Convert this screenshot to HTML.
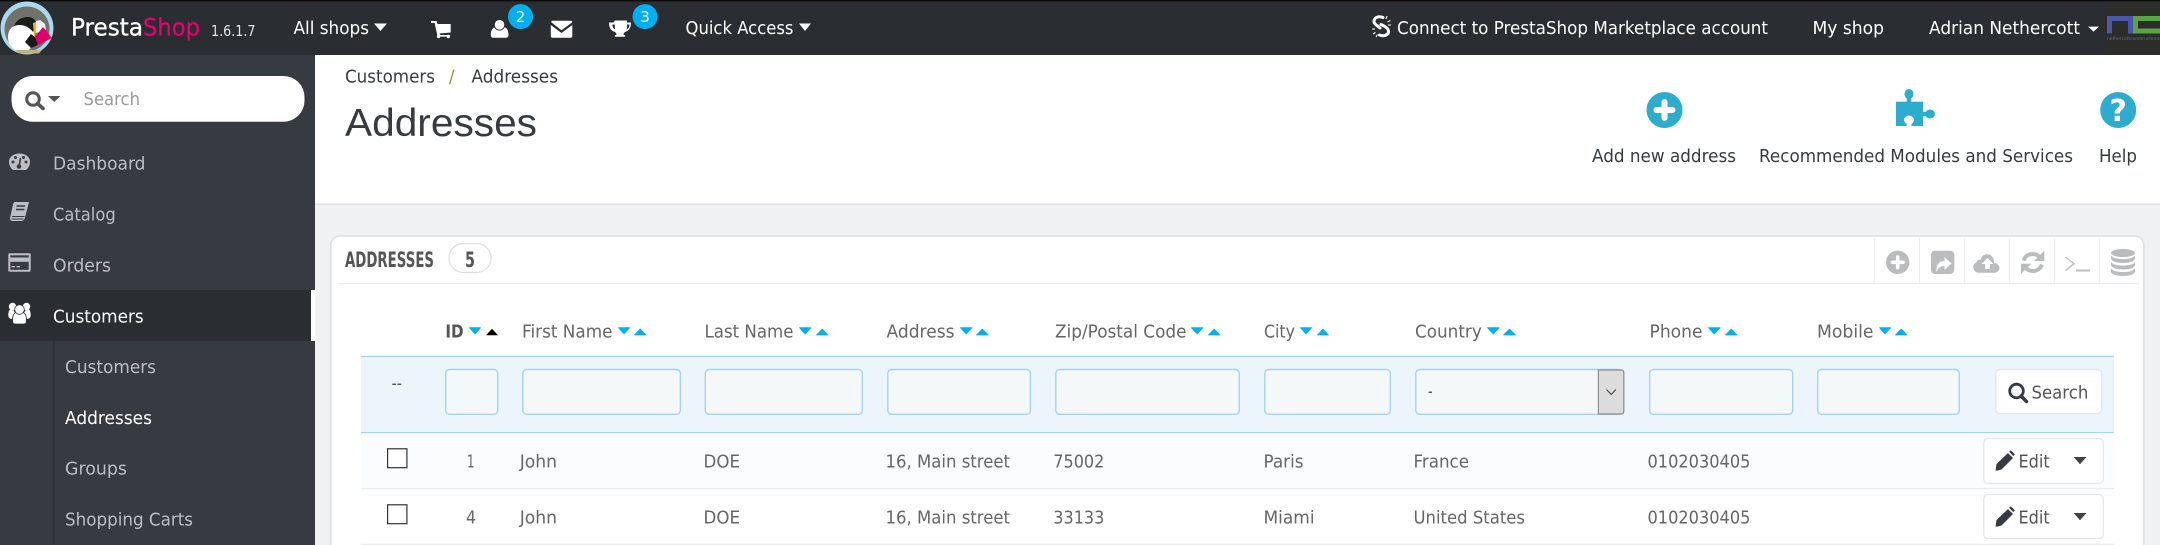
<!DOCTYPE html>
<html><head><meta charset="utf-8"><title>Addresses</title>
<style>
html,body{margin:0;padding:0;background:#eff1f2;width:2160px;height:545px;overflow:hidden}
svg{display:block}
text{font-family:"DejaVu Sans","Liberation Sans",sans-serif;font-size:18px}
.nav{fill:#fff}
.side{fill:#bcbec2}
.head{fill:#666}
.cell{fill:#666}
.dark{fill:#363a41}
.arr{fill:#00aff0;stroke:#00aff0;stroke-width:.8;stroke-linejoin:round}
.inp{fill:#f5f8f9;stroke:#a6d3ec;stroke-width:1.4}
.tool{fill:#bbbcbd}
</style></head><body>
<svg xmlns="http://www.w3.org/2000/svg" width="2160" height="545" viewBox="0 0 2160 545">
<!-- backgrounds -->
<rect width="2160" height="545" fill="#eff1f2"/>
<rect x="315" y="55" width="1845" height="149" fill="#fff"/>
<rect x="315" y="203.5" width="1845" height="1.5" fill="#dfe1e3"/>
<rect y="55" width="315" height="490" fill="#363a41"/>
<rect width="2160" height="55" fill="#2a2d32"/>
<rect width="2160" height="1.4" fill="#0c0c0c"/>

<!-- logo -->
<circle cx="27" cy="28" r="26.5" fill="#a8d9ec"/>
<circle cx="27" cy="29" r="22.500" fill="#72726d"/>
<path d="M8 37C8 30 12 25 20 25c7 0 13 3 15 9v9l-6 7H15C10 47 8 42 8 37Z" fill="#fff"/>
<path d="M14 26c2-6 8-9 14-9 4 0 7 2 8 6l-3 9c-3-4-8-7-13-7-2 0-4 0-6 1Z" fill="#1c1c1c"/>
<path d="M36 21l4-1 5 4 1 6-10 3Z" fill="#f4f4f4"/>
<path d="M33 23l3-1 0 11-2 4Z" fill="#f2b01e"/>
<path d="M43 27l9 11-14 7-3-8Z" fill="#df0067"/>
<path d="M25 42l6-8 4 3 3 8-7 3Z" fill="#1a1a1a"/>
<path d="M16 50h26l-3 3.500H19Z" fill="#c2b085"/>
<text x="71" y="35.5" style="font-size:24px;stroke:#fff;stroke-width:.3" fill="#fff" textLength="72" lengthAdjust="spacingAndGlyphs">Presta</text>
<text x="143" y="35.5" style="font-size:24px;stroke:#e6006b;stroke-width:.3" fill="#e6006b" textLength="57" lengthAdjust="spacingAndGlyphs">Shop</text>
<text x="211" y="36" style="font-size:15px" fill="#e4e4e4" textLength="44.500" lengthAdjust="spacingAndGlyphs">1.6.1.7</text>

<!-- top nav -->
<text class="nav" x="293.500" y="34" textLength="75.500" lengthAdjust="spacingAndGlyphs">All shops</text>
<polygon class="nav" points="374,23.5 387,23.5 380.5,31"/>
<!-- cart -->
<path class="nav" d="M431 21h5.5l1 3h13.2v8.500l-11 1 .4 1.500h10v1.600h-12.500L434.600 23H431Z"/>
<circle class="nav" cx="438.5" cy="36.5" r="1.7"/><circle class="nav" cx="448.3" cy="36.5" r="1.7"/>
<!-- user -->
<path class="nav" d="M490.800 35c0-5 2-7.500 5-8 2.500 1.800 5.500 1.800 8 0 3 .5 4.700 3 4.700 8 0 2-1.200 2.800-3 2.800h-11.700C492 37.800 490.800 37 490.800 35Z"/>
<circle class="nav" cx="499.500" cy="24.800" r="5.300" stroke="#2a2d32" stroke-width="1"/>
<!-- envelope -->
<path class="nav" d="M552.5 20.800h18.500c1 0 1.300.5 1.300 1.500l-10.800 8-10.200-8c0-1 .2-1.500 1.200-1.500Z"/>
<path class="nav" d="M550.800 25l10.700 8 10.800-8v11c0 1-.6 1.700-1.600 1.700h-18.300c-1 0-1.600-.7-1.600-1.700Z"/>
<!-- trophy -->
<path class="nav" d="M615 20.500h12v2h4c0 5-1.500 8-6 9.500-.7.700-1.300 1.300-1.600 2.400 0 .6 1.600.8 1.800 1.400v1h-10.400v-1c.2-.6 1.800-.8 1.800-1.400-.3-1.100-.9-1.700-1.600-2.400-4.500-1.500-6-4.500-6-9.500h4.500Zm-2.700 4c.2 2.500 1 4 2.900 5-.3-1.500-.4-3.200-.5-5Zm14.800 0c0 1.800-.2 3.500-.5 5 1.900-1 2.700-2.500 2.900-5Z"/>
<circle cx="520.5" cy="16.6" r="12.5" fill="#00aff0"/>
<text x="520.5" y="22" text-anchor="middle" fill="#fff" style="font-size:15px">2</text>
<circle cx="645" cy="16.6" r="12.5" fill="#00aff0"/>
<text x="645" y="22" text-anchor="middle" fill="#fff" style="font-size:15px">3</text>
<text class="nav" x="685.500" y="34" textLength="108" lengthAdjust="spacingAndGlyphs">Quick Access</text>
<polygon class="nav" points="799,23.5 811,23.5 805,31"/>
<!-- broken link -->
<g fill="none" stroke="#fff" stroke-width="3" stroke-linecap="round">
<path d="M1383 17.500C1378 15.500 1373.500 18 1374 22 1374.500 24.500 1378 26 1380 28"/>
<path d="M1381 24.500C1384.500 26 1389 28.500 1388.500 32 1388 35.500 1383 36.500 1379.500 35"/>
</g>
<g stroke="#fff" stroke-width="1.100"><path d="M1386 19l1-3M1387.500 22l2.800-1.500M1388 25h3M1372 29h3M1373 34l2.500-1.500M1376 37l1.500-2.500"/></g>
<text class="nav" x="1397" y="34" textLength="371" lengthAdjust="spacingAndGlyphs">Connect to PrestaShop Marketplace account</text>
<text class="nav" x="1812.500" y="34" textLength="71.500" lengthAdjust="spacingAndGlyphs">My shop</text>
<text class="nav" x="1929" y="34" textLength="151" lengthAdjust="spacingAndGlyphs">Adrian Nethercott</text>
<polygon class="nav" points="2088,26.6 2099,26.6 2093.5,31.6"/>
<!-- nc logo -->
<rect x="2105" y="1.4" width="55" height="53.6" fill="#2c2c29"/>
<path d="M2107 33.500V16h26v17.500h-5V21h-16v12.500Z" fill="#4a58ab"/>
<path d="M2160 16h-27v17.500h27v-5h-22V21h22Z" fill="#5da248"/>
<text x="2107" y="40" style="font-size:4.3px" fill="#5e6a8f" textLength="53" lengthAdjust="spacingAndGlyphs">nethercottconstructions</text>

<!-- sidebar search -->
<rect x="11.5" y="76" width="293" height="45.7" rx="21" fill="#fff"/>
<circle cx="33" cy="99" r="6.300" fill="none" stroke="#555" stroke-width="3"/>
<path d="M37.500 103.500l5.500 5" stroke="#555" stroke-width="3.600" stroke-linecap="round"/>
<polygon points="48,96 60.500,96 54.200,102" fill="#555"/>
<text x="83.500" y="105" fill="#999" textLength="56.500" lengthAdjust="spacingAndGlyphs">Search</text>

<!-- sidebar menu -->
<rect y="290" width="311" height="51" fill="#2a2d32"/>
<rect x="311" y="290" width="4" height="51" fill="#fff"/>
<rect x="53" y="341" width="1.4" height="204" fill="#2a2d32"/>
<!-- dashboard -->
<path class="side" d="M13 170c-2.500-2-4-5-4-8.500C9 157 13.500 153.500 19.500 153.500S30 157 30 161.500c0 3.500-1.500 6.500-4 8.500Z"/>
<g fill="#363a41"><circle cx="13" cy="162" r="1.500"/><circle cx="15.500" cy="157.500" r="1.500"/><circle cx="26" cy="162" r="1.500"/><circle cx="23.500" cy="157.500" r="1.500"/></g>
<path d="M19 167l1.500-9" stroke="#363a41" stroke-width="1.600"/><circle cx="19" cy="166.500" r="2.300" fill="#363a41"/>
<text class="side" x="53" y="169.500" textLength="92.500" lengthAdjust="spacingAndGlyphs">Dashboard</text>
<!-- catalog -->
<path class="side" d="M15 202h14l-4 15.500c-.5 2-1.500 3.500-4 3.500H12.500c-2 0-2.800-1.500-2.300-3.500L13 204.500C13.300 203 14 202 15 202Z"/>
<path d="M12 216.500h12.500M11.500 219h12" stroke="#363a41" stroke-width="1"/>
<path d="M16.500 206h8.500M16 209.500h8.500" stroke="#363a41" stroke-width="1.500"/>
<text class="side" x="53" y="220.300" textLength="62.700" lengthAdjust="spacingAndGlyphs">Catalog</text>
<!-- orders -->
<rect class="side" x="8.3" y="253.3" width="22.4" height="18.4" rx="1.5"/>
<rect x="10.3" y="255.3" width="18.4" height="2.2" fill="#363a41"/>
<rect x="10.3" y="261.800" width="18.4" height="8" fill="#363a41"/>
<path d="M11.500 266.700h3.500M16.500 266.700h3.500" stroke="#bcbec2" stroke-width="1.300"/>
<text class="side" x="53" y="271.300" textLength="58" lengthAdjust="spacingAndGlyphs">Orders</text>
<!-- customers -->
<g fill="#fff"><circle cx="12.500" cy="306.500" r="3.700"/><circle cx="26.500" cy="306.500" r="3.700"/>
<path d="M8.300 315c0-3 .7-5 2-5.500 1.500 1 2.500 1 3.500.7.300 1.200.800 2 1.600 2.800-2 1-3 3-3.200 6-2.600 0-3.900-1.500-3.900-4Z"/>
<path d="M30.700 315c0-3-.7-5-2-5.500-1.500 1-2.500 1-3.500.7-.3 1.200-.8 2-1.600 2.800 2 1 3 3 3.200 6 2.600 0 3.900-1.500 3.900-4Z"/>
<path d="M12.500 321c0-5 1.500-8 3.500-8.500 2 1.500 5 1.500 7 0 2 .5 3.500 3.500 3.500 8.500 0 2-1 3-2.500 3h-9c-1.500 0-2.500-1-2.500-3Z" stroke="#2a2d32" stroke-width=".8"/>
<circle cx="19.500" cy="309.500" r="4.800" stroke="#2a2d32" stroke-width=".8"/></g>
<text x="53" y="322.300" fill="#fff" textLength="90.700" lengthAdjust="spacingAndGlyphs">Customers</text>
<text class="side" x="65" y="372.800" textLength="91" lengthAdjust="spacingAndGlyphs">Customers</text>
<text x="65" y="423.800" fill="#fff" textLength="87" lengthAdjust="spacingAndGlyphs">Addresses</text>
<text class="side" x="65" y="474.600" textLength="62" lengthAdjust="spacingAndGlyphs">Groups</text>
<text class="side" x="65" y="525.600" textLength="128" lengthAdjust="spacingAndGlyphs">Shopping Carts</text>

<!-- page head -->
<text class="dark" x="345" y="82.5" textLength="90" lengthAdjust="spacingAndGlyphs">Customers</text>
<text x="449" y="82.5" fill="#6aa62f" textLength="5.5" lengthAdjust="spacingAndGlyphs">/</text>
<text class="dark" x="471.5" y="82.5" textLength="86.5" lengthAdjust="spacingAndGlyphs">Addresses</text>
<text x="345" y="136" fill="#363a41" style="font-size:39px;font-family:'Liberation Sans',sans-serif" textLength="192" lengthAdjust="spacingAndGlyphs">Addresses</text>
<!-- page toolbar -->
<circle cx="1664.5" cy="110" r="18" fill="#2eacce"/>
<path d="M1664.500 102v16M1656.500 110h16" stroke="#fff" stroke-width="6" stroke-linecap="round"/>
<g fill="#2eacce">
<rect x="1896" y="101.7" width="27" height="24.3"/>
<ellipse cx="1909" cy="94" rx="4.5" ry="5"/><rect x="1906.8" y="96" width="4.4" height="7"/>
<ellipse cx="1930" cy="114" rx="5" ry="4.5"/><rect x="1922" y="111.8" width="6" height="4.4"/>
</g>
<ellipse cx="1909" cy="120" rx="5" ry="4.5" fill="#fff"/><rect x="1906.6" y="121" width="4.8" height="5" fill="#fff"/>
<circle cx="2118.2" cy="110" r="18" fill="#2eacce"/>
<text x="2118.2" y="121" text-anchor="middle" fill="#fff" style="font-size:30px;font-weight:bold">?</text>
<text class="dark" x="1592" y="162" textLength="144" lengthAdjust="spacingAndGlyphs">Add new address</text>
<text class="dark" x="1759" y="162" textLength="314" lengthAdjust="spacingAndGlyphs">Recommended Modules and Services</text>
<text class="dark" x="2099" y="162" textLength="38" lengthAdjust="spacingAndGlyphs">Help</text>

<!-- panel -->
<rect x="330.8" y="236" width="1813" height="330" rx="9" fill="#fff" stroke="#dcdee0" stroke-width="1.5"/>
<rect x="337.5" y="283" width="1800.5" height="1.2" fill="#eeeeee"/>
<text x="345" y="267" fill="#555" style="font-size:21.500px;font-weight:bold" textLength="89" lengthAdjust="spacingAndGlyphs">ADDRESSES</text>
<rect x="449" y="243.5" width="42" height="29" rx="14.5" fill="#fff" stroke="#dcdee0" stroke-width="1.2"/>
<text x="470" y="267" text-anchor="middle" fill="#555" style="font-size:21.500px;font-weight:bold" textLength="10" lengthAdjust="spacingAndGlyphs">5</text>
<!-- panel tools -->
<g fill="#eeeeee"><rect x="1874" y="238" width="1" height="45"/><rect x="1919" y="238" width="1" height="45"/><rect x="1964" y="238" width="1" height="45"/><rect x="2009" y="238" width="1" height="45"/><rect x="2054" y="238" width="1" height="45"/><rect x="2099" y="238" width="1" height="45"/></g>
<circle class="tool" cx="1897.7" cy="262.3" r="11.7"/>
<path d="M1897.700 257v10.600M1892.400 262.300h10.600" stroke="#fff" stroke-width="3.600" stroke-linecap="round"/>
<rect class="tool" x="1931" y="250.7" width="23.3" height="23.3" rx="4"/>
<path d="M1936.500 272c-.5-6 1-10.500 8-11v-4l7 6.500-7 6.500v-4c-4 0-6 1.500-8 6Z" fill="#fff"/>
<path class="tool" d="M1979 272.700c-3.500 0-5.700-2.500-5.700-5.500 0-2.500 1.500-4.500 3.700-5.300 0-1 .4-1.500 1-1.900.8-.5 1.700-.5 2.500-.2 1-3.700 3.500-5.500 6.500-5.500 3.800 0 7 3 7 7.500 0 .4 0 .7-.1 1 3 .5 5.600 2.500 5.600 5.200 0 2.500-2.200 4.700-5 4.700Z"/>
<path d="M1987.500 258l-6 6h3.700v5h4.600v-5h3.700Z" fill="#fff"/>
<g fill="none" stroke="#bbbcbd" stroke-width="4">
<path d="M2023.500 260.500c1.500-4 5-6.500 9-6.500 3 0 5.500 1.200 7.500 3.200"/>
<path d="M2042 264.500c-1.500 4-5 6.500-9 6.500-3 0-5.500-1.200-7.500-3.200"/>
</g>
<path class="tool" d="M2044.300 250.700v10.300h-10.300Z"/><path class="tool" d="M2021 274v-10.300h10.300Z"/>
<path d="M2065.500 257l8.500 6.700-8.500 6.700" fill="none" stroke="#bbbcbd" stroke-width="1.400"/>
<rect class="tool" x="2076" y="269.5" width="14" height="2"/>
<g class="tool"><ellipse cx="2123" cy="253" rx="12" ry="4"/>
<path d="M2111 255.500c2 2.500 6 3.500 12 3.500s10-1 12-3.500v3.500c-1 2.500-6 4-12 4s-11-1.500-12-4Z"/>
<path d="M2111 262c2 2.500 6 3.500 12 3.500s10-1 12-3.500v3.500c-1 2.500-6 4-12 4s-11-1.500-12-4Z"/>
<path d="M2111 268.500c2 2.500 6 3.500 12 3.500s10-1 12-3.500v3.500c-1 2.500-6 4-12 4s-11-1.500-12-4Z"/></g>

<!-- table head -->
<text x="445.4" y="337.5" fill="#555" style="font-weight:bold" textLength="18.3" lengthAdjust="spacingAndGlyphs">ID</text>
<polygon class="arr" points="469.5,327.7 480.5,327.7 475,334"/><polygon points="486,335.300 498,335.300 492,328.700" fill="#000"/>
<text class="head" x="522" y="337.5" textLength="90.5" lengthAdjust="spacingAndGlyphs">First Name</text>
<polygon class="arr" points="618.5,327.7 629.5,327.7 624,334"/><polygon class="arr" points="634.5,335 646,335 640.2,329"/>
<text class="head" x="704.5" y="337.5" textLength="89" lengthAdjust="spacingAndGlyphs">Last Name</text>
<polygon class="arr" points="799.5,327.7 811,327.7 805.2,334"/><polygon class="arr" points="816.5,335 828,335 822.2,329"/>
<text class="head" x="886.5" y="337.5" textLength="68" lengthAdjust="spacingAndGlyphs">Address</text>
<polygon class="arr" points="960.5,327.7 972,327.7 966.2,334"/><polygon class="arr" points="976.5,335 988.2,335 982.3,329"/>
<text class="head" x="1055" y="337.5" textLength="131.500" lengthAdjust="spacingAndGlyphs">Zip/Postal Code</text>
<polygon class="arr" points="1191.5,327.7 1203,327.7 1197.2,334"/><polygon class="arr" points="1208.5,335 1220,335 1214.2,329"/>
<text class="head" x="1264" y="337.5" textLength="31" lengthAdjust="spacingAndGlyphs">City</text>
<polygon class="arr" points="1300.5,327.7 1311.5,327.7 1306,334"/><polygon class="arr" points="1317.5,335 1328.5,335 1323,329"/>
<text class="head" x="1415" y="337.5" textLength="66.800" lengthAdjust="spacingAndGlyphs">Country</text>
<polygon class="arr" points="1487.5,327.7 1499.2,327.7 1493.3,334"/><polygon class="arr" points="1503.5,335 1515.5,335 1509.5,329"/>
<text class="head" x="1649.5" y="337.5" textLength="53" lengthAdjust="spacingAndGlyphs">Phone</text>
<polygon class="arr" points="1708.5,327.7 1720,327.7 1714.2,334"/><polygon class="arr" points="1725.5,335 1737,335 1731.2,329"/>
<text class="head" x="1817" y="337.5" textLength="56.500" lengthAdjust="spacingAndGlyphs">Mobile</text>
<polygon class="arr" points="1879.5,327.7 1890.5,327.7 1885,334"/><polygon class="arr" points="1895.5,335 1907,335 1901.2,329"/>

<!-- filter row -->
<rect x="361" y="356" width="1753" height="77" fill="#ebf5fb"/>
<rect x="361" y="355.7" width="1753" height="1.3" fill="#a6d3ec"/>
<rect x="361" y="432" width="1753" height="1.3" fill="#a6d3ec"/>
<text x="391.6" y="389" fill="#555" textLength="10.4" lengthAdjust="spacingAndGlyphs">--</text>
<rect class="inp" x="445.7" y="369.5" width="52" height="44.8" rx="4"/>
<rect class="inp" x="522.8" y="369.5" width="157.6" height="44.8" rx="4"/>
<rect class="inp" x="705.3" y="369.5" width="157" height="44.8" rx="4"/>
<rect class="inp" x="887.8" y="369.5" width="142.6" height="44.8" rx="4"/>
<rect class="inp" x="1055.8" y="369.5" width="183.5" height="44.8" rx="4"/>
<rect class="inp" x="1264.8" y="369.5" width="125.5" height="44.8" rx="4"/>
<rect class="inp" x="1415.8" y="369.5" width="208" height="44.8" rx="4"/>
<text x="1428" y="397" fill="#555" textLength="4.6" lengthAdjust="spacingAndGlyphs">-</text>
<path d="M1598.400 370h22.600c1.700 0 2.800 1.100 2.800 2.800v38.400c0 1.700-1.100 2.800-2.800 2.800h-22.600Z" fill="#dcdcdc" stroke="#8f8f8f" stroke-width="1.200"/>
<path d="M1606.500 389.500l4.700 5 4.700-5" fill="none" stroke="#444" stroke-width="1.100"/>
<rect class="inp" x="1649.7" y="369.5" width="143" height="44.8" rx="4"/>
<rect class="inp" x="1817.7" y="369.5" width="141.6" height="44.8" rx="4"/>
<rect x="1995.8" y="369.5" width="105.8" height="44" rx="4" fill="#fff" stroke="#e4e6e8" stroke-width="1.2"/>
<circle cx="2016.5" cy="391" r="6.8" fill="none" stroke="#363a41" stroke-width="2.8"/>
<path d="M2021 396l5.500 5.500" stroke="#363a41" stroke-width="3.400" stroke-linecap="round"/>
<text x="2031.5" y="398.5" fill="#555" textLength="56.8" lengthAdjust="spacingAndGlyphs">Search</text>

<!-- rows -->
<rect x="361" y="433.3" width="1753" height="55" fill="#fafcfe"/>
<rect x="361" y="488" width="1753" height="1.2" fill="#e9ebed"/>
<rect x="361" y="543.7" width="1753" height="1.3" fill="#e9ebed"/>
<rect x="387.6" y="448.8" width="19.3" height="18.9" fill="#fff" stroke="#333" stroke-width="1.2"/>
<rect x="387.6" y="504.8" width="19.3" height="18.9" fill="#fff" stroke="#333" stroke-width="1.2"/>

<text class="cell" x="467" y="467.5" textLength="7.5" lengthAdjust="spacingAndGlyphs">1</text>
<text class="cell" x="519.7" y="467.5" textLength="37.3" lengthAdjust="spacingAndGlyphs">John</text>
<text class="cell" x="703.5" y="467.5" textLength="36.5" lengthAdjust="spacingAndGlyphs">DOE</text>
<text class="cell" x="885.5" y="467.5" textLength="124.5" lengthAdjust="spacingAndGlyphs">16, Main street</text>
<text class="cell" x="1053.3" y="467.5" textLength="51" lengthAdjust="spacingAndGlyphs">75002</text>
<text class="cell" x="1263.5" y="467.5" textLength="40" lengthAdjust="spacingAndGlyphs">Paris</text>
<text class="cell" x="1413.5" y="467.5" textLength="55.5" lengthAdjust="spacingAndGlyphs">France</text>
<text class="cell" x="1647.5" y="467.5" textLength="102.9" lengthAdjust="spacingAndGlyphs">0102030405</text>

<text class="cell" x="466" y="523.5" textLength="10" lengthAdjust="spacingAndGlyphs">4</text>
<text class="cell" x="519.7" y="523.5" textLength="37.3" lengthAdjust="spacingAndGlyphs">John</text>
<text class="cell" x="703.5" y="523.5" textLength="36.5" lengthAdjust="spacingAndGlyphs">DOE</text>
<text class="cell" x="885.5" y="523.5" textLength="124.5" lengthAdjust="spacingAndGlyphs">16, Main street</text>
<text class="cell" x="1053.3" y="523.5" textLength="51" lengthAdjust="spacingAndGlyphs">33133</text>
<text class="cell" x="1263.5" y="523.5" textLength="51.1" lengthAdjust="spacingAndGlyphs">Miami</text>
<text class="cell" x="1413.5" y="523.5" textLength="111.5" lengthAdjust="spacingAndGlyphs">United States</text>
<text class="cell" x="1647.5" y="523.5" textLength="102.9" lengthAdjust="spacingAndGlyphs">0102030405</text>

<!-- edit buttons -->
<rect x="1983.8" y="438.5" width="119.5" height="44.8" rx="4" fill="#fff" stroke="#e4e6e8" stroke-width="1.2"/>
<path d="M1996.500 464l11.500-11 5 5-11.500 11.500-5 1.200c-.8 0-1-.5-.8-1.200Z" fill="#363a41"/>
<path d="M2009.200 451.800l1.600-1.600 4 4-1.600 1.800Z" fill="#363a41"/>
<text x="2018.5" y="467.5" fill="#555" textLength="31.2" lengthAdjust="spacingAndGlyphs">Edit</text>
<polygon points="2073.6,457 2086.5,457 2080,464.3" fill="#444"/>
<rect x="1983.8" y="494.5" width="119.5" height="44" rx="4" fill="#fff" stroke="#e4e6e8" stroke-width="1.2"/>
<path d="M1996.500 520l11.500-11 5 5-11.500 11.500-5 1.200c-.8 0-1-.5-.8-1.200Z" fill="#363a41"/>
<path d="M2009.200 507.800l1.600-1.600 4 4-1.600 1.800Z" fill="#363a41"/>
<text x="2018.5" y="523.5" fill="#555" textLength="31.2" lengthAdjust="spacingAndGlyphs">Edit</text>
<polygon points="2073.6,513 2086.5,513 2080,520.3" fill="#444"/>
</svg>
</body></html>
